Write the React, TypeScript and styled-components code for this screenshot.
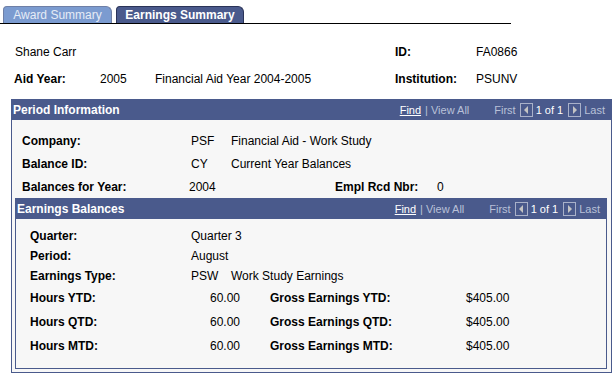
import * as React from "react";
import styled, { createGlobalStyle } from "styled-components";

const GlobalStyle = createGlobalStyle`
    body {
        margin: 0;
        background: #ffffff;
        font-family: "Liberation Sans", Arial, sans-serif;
        font-size: 12px;
        color: #000000;
    }
`;

const Page = styled.div`
    width: 616px;
    height: 378px;
    overflow: hidden;
`;

const TabBar = styled.div`
    display: flex;
    align-items: flex-end;
    gap: 4px;
    width: 508px;
    height: 17px;
    padding: 6px 0 0 3px;
    border-bottom: 1px solid #000000;
`;

const Tab = styled.div<{ $active?: boolean }>`
    display: flex;
    align-items: center;
    justify-content: center;
    box-sizing: border-box;
    height: 17px;
    width: ${(p) => (p.$active ? "128px" : "109px")};
    border: 1px solid ${(p) => (p.$active ? "#2a3358" : "#6e7fa6")};
    border-bottom: none;
    border-radius: 4px 6px 0 0;
    background: ${(p) => (p.$active ? "#4a5a8c" : "#7b9bd0")};
    color: ${(p) => (p.$active ? "#ffffff" : "#e6ecf6")};
    font-weight: ${(p) => (p.$active ? "bold" : "normal")};
    font-size: 12px;
`;

const InfoGrid = styled.div`
    display: grid;
    grid-template-columns: 86px 55px 240px 81px 1fr;
    grid-auto-rows: 27px;
    align-items: center;
    padding: 14px 0 0 14px;
`;

const Name = styled.span`
    grid-column: 1 / 4;
    padding-left: 1px;
`;

const Label = styled.span<{ $w?: number; $ml?: number }>`
    font-weight: bold;
    white-space: nowrap;
    ${(p) => (p.$w ? `width: ${p.$w}px; flex: none;` : "")}
    margin-left: ${(p) => p.$ml ?? 0}px;
`;

const Value = styled.span<{ $w?: number; $right?: boolean }>`
    white-space: nowrap;
    ${(p) => (p.$w ? `width: ${p.$w}px; flex: none;` : "")}
    text-align: ${(p) => (p.$right ? "right" : "left")};
`;

const Box = styled.section<{ $nested?: boolean }>`
    box-sizing: border-box;
    border: 1px solid #4a5a8c;
    background: #f7f7f7;
    ${(p) =>
        p.$nested
            ? `margin: 0 4px 3px 3px;`
            : `margin: 7px 0 0 11px; width: 601px;`}
`;

const BoxHeader = styled.div`
    display: flex;
    align-items: center;
    height: 20px;
    background: #4a5a8c;
    color: #ffffff;
    padding: 0 6px 0 1px;
`;

const Title = styled.span`
    font-weight: bold;
    font-size: 12px;
    flex: 1;
`;

const Nav = styled.div`
    display: flex;
    align-items: center;
    font-size: 11px;
    color: #b9c1d8;
`;

const NavLink = styled.span`
    color: #ffffff;
    text-decoration: underline;
`;

const NavDim = styled.span<{ $ml?: number }>`
    margin-left: ${(p) => p.$ml ?? 0}px;
`;

const NavBright = styled.span<{ $ml?: number }>`
    color: #ffffff;
    margin-left: ${(p) => p.$ml ?? 0}px;
`;

const ArrowBtn = styled.svg<{ $ml?: number }>`
    display: block;
    margin-left: ${(p) => p.$ml ?? 0}px;
`;

const Rows = styled.div<{ $pl: number; $pt: number; $pb?: number }>`
    display: flex;
    flex-direction: column;
    padding: ${(p) => p.$pt}px 0 ${(p) => p.$pb ?? 0}px ${(p) => p.$pl}px;
`;

const Row = styled.div<{ $h: number }>`
    display: flex;
    align-items: center;
    height: ${(p) => p.$h}px;
`;

const Arrow: React.FC<{ dir: "left" | "right"; ml: number }> = ({ dir, ml }) => (
    <ArrowBtn $ml={ml} width="13" height="14" viewBox="0 0 13 14">
        <rect x="0.5" y="0.5" width="12" height="13" fill="none" stroke="#a9b1c9" />
        {dir === "left" ? (
            <polygon points="8,3 8,11 4,7" fill="#c4c4c4" />
        ) : (
            <polygon points="5,3 5,11 9,7" fill="#c4c4c4" />
        )}
    </ArrowBtn>
);

const Navigator: React.FC = () => (
    <Nav>
        <NavLink>Find</NavLink>
        <NavDim $ml={4}>|</NavDim>
        <NavDim $ml={3}>View All</NavDim>
        <NavDim $ml={25}>First</NavDim>
        <Arrow dir="left" ml={4} />
        <NavBright $ml={3}>1 of 1</NavBright>
        <Arrow dir="right" ml={5} />
        <NavDim $ml={3}>Last</NavDim>
    </Nav>
);

const hours = [
    { k: "YTD", h: "60.00", g: "$405.00" },
    { k: "QTD", h: "60.00", g: "$405.00" },
    { k: "MTD", h: "60.00", g: "$405.00" },
];

export default function App() {
    return (
        <Page>
            <GlobalStyle />
            <TabBar>
                <Tab>Award Summary</Tab>
                <Tab $active>Earnings Summary</Tab>
            </TabBar>

            <InfoGrid>
                <Name>Shane Carr</Name>
                <Label>ID:</Label>
                <Value>FA0866</Value>
                <Label>Aid Year:</Label>
                <Value>2005</Value>
                <Value>Financial Aid Year 2004-2005</Value>
                <Label>Institution:</Label>
                <Value>PSUNV</Value>
            </InfoGrid>

            <Box>
                <BoxHeader>
                    <Title>Period Information</Title>
                    <Navigator />
                </BoxHeader>
                <Rows $pl={10} $pt={9}>
                    <Row $h={23}>
                        <Label $w={169}>Company:</Label>
                        <Value $w={40}>PSF</Value>
                        <Value>Financial Aid - Work Study</Value>
                    </Row>
                    <Row $h={23}>
                        <Label $w={169}>Balance ID:</Label>
                        <Value $w={40}>CY</Value>
                        <Value>Current Year Balances</Value>
                    </Row>
                    <Row $h={23}>
                        <Label $w={167}>Balances for Year:</Label>
                        <Value $w={146}>2004</Value>
                        <Label $w={102}>Empl Rcd Nbr:</Label>
                        <Value>0</Value>
                    </Row>
                </Rows>

                <Box $nested>
                    <BoxHeader>
                        <Title>Earnings Balances</Title>
                        <Navigator />
                    </BoxHeader>
                    <Rows $pl={14} $pt={7} $pb={10}>
                        <Row $h={20}>
                            <Label $w={161}>Quarter:</Label>
                            <Value>Quarter 3</Value>
                        </Row>
                        <Row $h={20}>
                            <Label $w={161}>Period:</Label>
                            <Value>August</Value>
                        </Row>
                        <Row $h={20}>
                            <Label $w={161}>Earnings Type:</Label>
                            <Value $w={40}>PSW</Value>
                            <Value>Work Study Earnings</Value>
                        </Row>
                        {hours.map((r) => (
                            <Row $h={24} key={r.k}>
                                <Label $w={161}>Hours {r.k}:</Label>
                                <Value $w={49} $right>
                                    {r.h}
                                </Value>
                                <Label $w={196} $ml={30}>
                                    Gross Earnings {r.k}:
                                </Label>
                                <Value>{r.g}</Value>
                            </Row>
                        ))}
                    </Rows>
                </Box>
            </Box>
        </Page>
    );
}
